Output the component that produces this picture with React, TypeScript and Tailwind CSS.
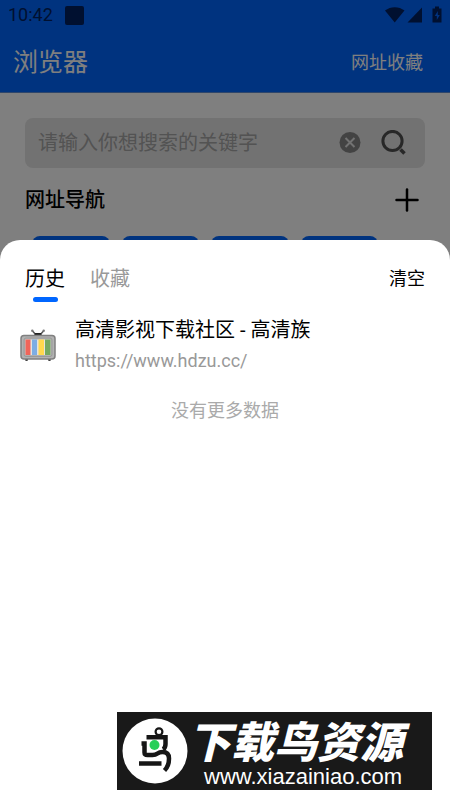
import { Plus } from "lucide-react";

const shortcuts = ["site-1", "site-2", "site-3", "site-4"];

const history = [{ title: "高清影视下载社区 - 高清族", url: "https://www.hdzu.cc/" }];

function StatusIcons() {
  return (
    <svg width="58" height="18" viewBox="0 0 58 18" fill="#002060" aria-hidden="true">
      <path d="M1 4.500C6.500 0 15 0 20.500 4.500L10.700 16.500Z" />
      <path d="M38 1.500V16.500H23.500Z" />
      <path d="M51 .5h4v2h2.500v14h-9v-14H51Z" />
      <path d="M53.800 5l-3 5h2v4l3-5h-2Z" fill="#0066ff" />
    </svg>
  );
}

function SearchIcon() {
  return (
    <svg width="26" height="26" viewBox="0 0 26 26" fill="none" stroke="#505050" strokeWidth="3" aria-hidden="true">
      <circle cx="11.500" cy="11" r="9.600" />
      <path d="M19.500 19.500L23.500 23.500" strokeWidth="3.500" />
    </svg>
  );
}

function ClearIcon() {
  return (
    <svg width="22" height="22" viewBox="0 0 22 22" aria-hidden="true">
      <circle cx="11" cy="10.500" r="10.500" fill="#868686" />
      <path d="M6.500 6l9 9M15.500 6l-9 9" stroke="#e4e4e4" strokeWidth="2" />
    </svg>
  );
}

function TvIcon() {
  return (
    <svg width="36" height="32" viewBox="0 0 36 32" aria-hidden="true">
      <path d="M12.500 2l4 4.500M23.500 2l-4 4.500" stroke="#555" strokeWidth="1.500" />
      <circle cx="12.300" cy="1.800" r="1.200" fill="#777" />
      <circle cx="23.700" cy="1.800" r="1.200" fill="#777" />
      <path d="M15 4h6l1 3h-8Z" fill="#222" />
      <path d="M5 29h3.500l-1 3h-2ZM27.500 29H31l-.5 3h-2Z" fill="#444" />
      <rect x="1" y="6.500" width="34" height="23.500" rx="3" fill="#b2b2b2" stroke="#808080" strokeWidth="1.500" />
      <rect x="4" y="9" width="28" height="18.500" rx="2" fill="#b0b0b0" stroke="#999" />
      <rect x="5.500" y="10.500" width="25" height="15.500" fill="#e6e3dc" />
      <rect x="5.500" y="10.500" width="5" height="15.500" fill="#f0655a" />
      <rect x="12" y="10.500" width="5" height="15.500" fill="#7dade3" />
      <rect x="18.500" y="10.500" width="5.500" height="15.500" fill="#ffd84d" />
      <rect x="25" y="10.500" width="5.500" height="15.500" fill="#74a860" />
    </svg>
  );
}

function BirdLogo() {
  return (
    <svg width="66" height="66" viewBox="0 0 66 66" fill="none" stroke="#161616" strokeWidth="4.500" aria-hidden="true">
      <circle cx="33" cy="33" r="32.500" fill="#fff" stroke="none" />
      <circle cx="37" cy="13.800" r="3.400" strokeWidth="2.200" />
      <path d="M24.500 19.300H43.500V26q0 4-2.500 5.500" />
      <path d="M19.500 25.500h3V34.500q0 2.500 3 2.500h5q3 0 5-1.500t5-1.500q6.500 0 6.500 6.500Q47 48 42.500 52.500" />
      <path d="M17 45.500H39.500" />
      <circle cx="32.500" cy="27" r="5" fill="#28cf59" stroke="none" />
    </svg>
  );
}

function HomePage() {
  return (
    <div>
      <header className="border-b border-[#5c8dd6] bg-[#0066ff]">
        <div className="flex h-[30px] items-center justify-between px-2">
          <div className="flex items-center gap-3 font-[Roboto] text-lg text-[#002060]">
            <span>10:42</span>
            <span className="size-[19px] rounded-xs bg-[#002060]" />
          </div>
          <StatusIcons />
        </div>
        <div className="flex h-[62px] items-center justify-between pl-[13px] pr-[27px] pt-1 text-white">
          <h1 className="text-[25px]">浏览器</h1>
          <button className="text-lg">网址收藏</button>
        </div>
      </header>

      <main className="px-[25px] pt-[25px]">
        <form className="flex h-[50px] items-center rounded-lg bg-[#e4e4e4] pl-[13px] pr-[18px]">
          <input
            type="text"
            aria-label="搜索"
            placeholder="请输入你想搜索的关键字"
            className="min-w-0 flex-1 bg-transparent text-xl outline-none placeholder:text-[#a6a6a6]"
          />
          <button type="button" aria-label="清除" className="mr-5">
            <ClearIcon />
          </button>
          <button type="button" aria-label="搜索">
            <SearchIcon />
          </button>
        </form>

        <div className="flex h-[68px] items-center justify-between pb-1">
          <h2 className="text-xl font-medium">网址导航</h2>
          <button aria-label="添加">
            <Plus size={36} strokeWidth={2.5} absoluteStrokeWidth />
          </button>
        </div>

        <div className="grid grid-cols-4 gap-3 pl-[7px] pr-[47px]">
          {shortcuts.map((id) => (
            <div key={id} className="h-10 rounded-lg bg-[#0066ff]" />
          ))}
        </div>
      </main>
    </div>
  );
}

function HistorySheet() {
  return (
    <section className="fixed inset-x-0 bottom-0 h-[70vh] rounded-t-[20px] bg-white">
      <div className="flex items-start justify-between px-[25px] pt-[25px]">
        <div className="flex gap-[25px] text-xl">
          <button className="flex flex-col items-center gap-1">
            历史
            <span className="h-[5px] w-[25px] rounded-full bg-[#0066ff]" />
          </button>
          <button className="self-start text-[#999]">收藏</button>
        </div>
        <button className="text-lg">清空</button>
      </div>

      <ul>
        {history.map((item) => (
          <li key={item.url} className="flex items-center gap-[19px] px-5 pt-3">
            <TvIcon />
            <div>
              <p className="text-xl leading-8">{item.title}</p>
              <a href={item.url} className="block text-lg leading-[30px] text-[#999]">{item.url}</a>
            </div>
          </li>
        ))}
      </ul>

      <p className="pt-[21px] text-center text-lg text-[#aaa]">没有更多数据</p>
    </section>
  );
}

function SiteBadge() {
  return (
    <div className="fixed bottom-[10px] right-[18px] flex h-[78px] w-[315px] items-center bg-[#191919] pl-[5px] text-white">
      <BirdLogo />
      <div className="shrink-0 pt-1">
        <p className="whitespace-nowrap text-[43px] font-black italic leading-12">下载鸟资源</p>
        <p className="pl-4 font-['Liberation_Sans'] text-[22px] leading-5">www.xiazainiao.com</p>
      </div>
    </div>
  );
}

export default function App() {
  return (
    <div className="min-h-screen bg-white font-[Roboto,'Noto_Sans_CJK_SC',sans-serif] text-black">
      <HomePage />
      <div className="fixed inset-0 bg-black/50" />
      <HistorySheet />
      <SiteBadge />
    </div>
  );
}
